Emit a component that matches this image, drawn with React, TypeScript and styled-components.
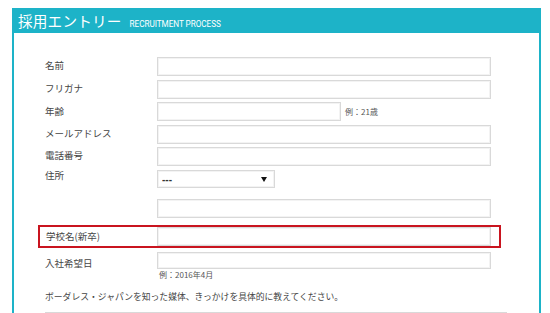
import React from 'react';
import styled, {createGlobalStyle} from 'styled-components';

const GlobalStyle = createGlobalStyle`
  html, body {
    margin: 0;
    padding: 0;
    background: #fff;
    overflow: hidden;
  }
  body {
    font-family: 'Noto Sans CJK JP', 'Noto Sans', sans-serif;
    color: #444;
  }
`

const teal = '#1db3c8';

const Panel = styled.div`
  margin: 8px 0 0 12px;
  width: 529px;
`

const Header = styled.div`
  display: flex;
  align-items: baseline;
  height: 25px;
  padding-left: 6px;
  background: ${teal};
  color: #fff;
  box-sizing: border-box;
`

const Title = styled.h1`
  margin: 0;
  font-size: 14.6px;
  line-height: 25px;
  font-weight: 400;
  letter-spacing: 0.2px;
`

const SubTitle = styled.span`
  margin-left: 8px;
  font-family: 'Roboto', 'Liberation Sans', sans-serif;
  font-size: 8.2px;
  letter-spacing: -0.05px;
  text-transform: uppercase;
`

const Body = styled.div`
  border-left: 2px solid ${teal};
  border-right: 2px solid ${teal};
  padding: 24px 0 40px 31px;
  height: 320px;
`

const Row = styled.div<{ $mt?: number; $highlight?: boolean }>`
  display: grid;
  grid-template-columns: ${p => p.$highlight ? 111 : 112}px auto;
  align-items: start;
  margin-top: ${p => p.$mt ?? 0}px;
  ${p => p.$highlight && `
    margin-left: -7px;
    width: 463px;
    box-sizing: border-box;
    padding-left: 6px;
    border: 2px solid #c9141f;
  `}
`

const Label = styled.label<{ $shift?: number }>`
  font-size: 9.5px;
  line-height: 19px;
  color: #444;
  margin-top: ${p => p.$shift ?? 0}px;
`

const Field = styled.div`
  display: flex;
  align-items: center;
  gap: 4px;
`

const FieldStack = styled.div`
  display: flex;
  flex-direction: column;
`

const Input = styled.input<{ $w?: number; $h?: number }>`
  display: block;
  width: ${p => p.$w ?? 334}px;
  height: ${p => p.$h ?? 19}px;
  box-sizing: border-box;
  margin: 0;
  padding: 0 4px;
  border: 1px solid #d9d9d9;
  box-shadow: inset 0 0 0 1px #f3f3f3;
  background: #fff;
  outline: none;
`

const Hint = styled.span`
  font-size: 8px;
  line-height: 10px;
  color: #555;
`

const HintBelow = styled(Hint)`
  margin: 1px 0 0 2px;
`

const SelectWrap = styled.div`
  position: relative;
  width: 118px;
  height: 18px;
`

const Select = styled.select`
  appearance: none;
  display: block;
  width: 100%;
  height: 100%;
  box-sizing: border-box;
  margin: 0;
  padding: 0 0 0 4px;
  border: 1px solid #d9d9d9;
  box-shadow: inset 0 0 0 1px #f3f3f3;
  background: #fff;
  font-family: 'Liberation Sans', sans-serif;
  font-size: 10px;
  font-weight: 700;
  color: #333;
  outline: none;
`

const Arrow = styled.span`
  position: absolute;
  right: 8px;
  top: 7px;
  width: 0;
  height: 0;
  border-left: 3px solid transparent;
  border-right: 3px solid transparent;
  border-top: 5px solid #111;
  pointer-events: none;
`

const Question = styled.p`
  margin: 11px 0 0;
  font-size: 8.8px;
  line-height: 12px;
  color: #444;
`

const TextArea = styled.textarea`
  display: block;
  width: 462px;
  height: 60px;
  box-sizing: border-box;
  margin: 9px 0 0;
  border: 1px solid #d9d9d9;
  resize: none;
  outline: none;
`

export default function App() {
  return (
    <>
      <GlobalStyle/>
      <Panel>
        <Header>
          <Title>採用エントリー</Title>
          <SubTitle>Recruitment Process</SubTitle>
        </Header>
        <Body>
          <Row>
            <Label $shift={-1}>名前</Label>
            <Input/>
          </Row>
          <Row $mt={4}>
            <Label $shift={-1}>フリガナ</Label>
            <Input/>
          </Row>
          <Row $mt={3}>
            <Label>年齢</Label>
            <Field>
              <Input $w={184}/>
              <Hint>例：21歳</Hint>
            </Field>
          </Row>
          <Row $mt={4}>
            <Label $shift={-1}>メールアドレス</Label>
            <Input/>
          </Row>
          <Row $mt={3}>
            <Label $shift={-1}>電話番号</Label>
            <Input/>
          </Row>
          <Row $mt={4}>
            <Label $shift={-4}>住所</Label>
            <SelectWrap>
              <Select defaultValue="">
                <option value="">---</option>
              </Select>
              <Arrow/>
            </SelectWrap>
          </Row>
          <Row $mt={11}>
            <Label/>
            <Input/>
          </Row>
          <Row $mt={7} $highlight>
            <Label>学校名(新卒)</Label>
            <Input/>
          </Row>
          <Row $mt={4}>
            <Label $shift={2}>入社希望日</Label>
            <FieldStack>
              <Input $h={17}/>
              <HintBelow>例：2016年4月</HintBelow>
            </FieldStack>
          </Row>
          <Question>ボーダレス・ジャパンを知った媒体、きっかけを具体的に教えてください。</Question>
          <TextArea/>
        </Body>
      </Panel>
    </>
  );
}
